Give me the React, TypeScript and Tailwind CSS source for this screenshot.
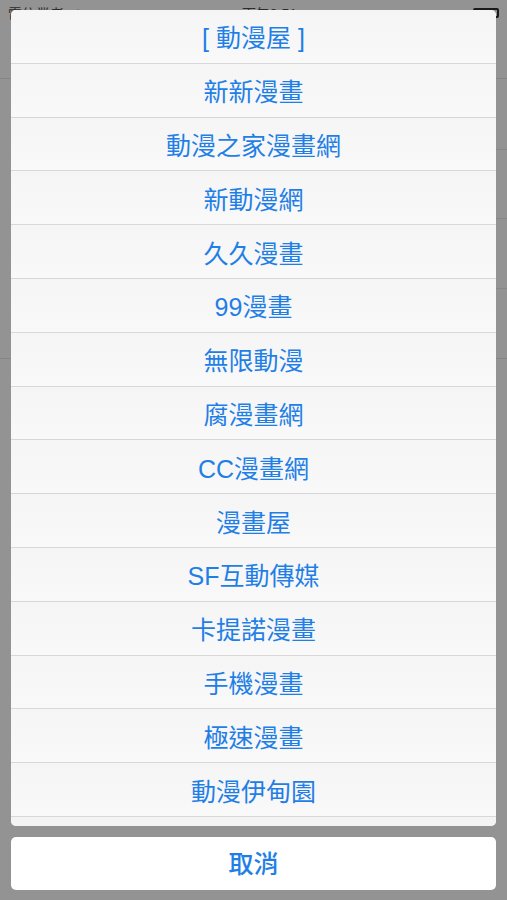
import React from "react";

// Sources listed in the action sheet.
const SOURCES = [
  "[ 動漫屋 ]",
  "新新漫畫",
  "動漫之家漫畫網",
  "新動漫網",
  "久久漫畫",
  "99漫畫",
  "無限動漫",
  "腐漫畫網",
  "CC漫畫網",
  "漫畫屋",
  "SF互動傳媒",
  "卡提諾漫畫",
  "手機漫畫",
  "極速漫畫",
  "動漫伊甸園",
];

const FONT = "[font-family:'Liberation_Sans','Noto_Sans_CJK_TC',sans-serif]";

function Underlay() {
  // Dimmed page behind the sheet: status bar + a few table separators.
  return (
    <div className="absolute inset-0">
      <div className="flex items-start justify-between px-[8px] pt-[4px] text-[14px] text-[#2b2b2b]">
        <div className="flex items-center gap-[6px]">
          <span>電信業者</span>
          <svg width="16" height="12" viewBox="0 0 16 12">
            <path d="M1 4.5a10 10 0 0 1 14 0" stroke="#2b2b2b" strokeWidth="2" fill="none" />
          </svg>
        </div>
        <span className="mr-[20px]">下午8:51</span>
        <div className="mt-[4px] h-[10px] w-[26px] rounded-[2px] border-2 border-[#1a1a1a]" />
      </div>
      <div className="mt-[53px] h-px bg-[#858585]" />
      <div className="mt-[70px] ml-[30px] h-px bg-[#878787]" />
      <div className="mt-[68px] ml-[30px] h-px bg-[#878787]" />
      <div className="mt-[69px] ml-[30px] h-px bg-[#878787]" />
      <div className="mt-[69px] h-px bg-[#858585]" />
    </div>
  );
}

export default function App() {
  return (
    <div className={`relative h-[900px] w-[507px] overflow-hidden bg-[#939393] ${FONT}`}>
      <Underlay />
      <div className="relative flex h-full flex-col gap-[11px] px-[11px] pt-[10px] pb-[10px]">
        <div className="h-[816px] overflow-hidden rounded-[5px] bg-[#f6f6f6]">
          {SOURCES.map((s) => (
            <div
              key={s}
              className="flex h-[53.8px] items-center justify-center border-b border-[#d8d8d8] bg-gradient-to-b from-[#f5f5f5] to-[#f9f9f9] pt-[5px] text-[25px] leading-none text-[#1f7fe6]"
            >
              {s}
            </div>
          ))}
          <div className="h-[53.8px] bg-[#f4f4f4]" />
        </div>
        <div className="flex h-[53px] items-center justify-center rounded-[5px] bg-white pt-[3px] text-[25px] font-medium text-[#1f7fe6]">
          取消
        </div>
      </div>
    </div>
  );
}
